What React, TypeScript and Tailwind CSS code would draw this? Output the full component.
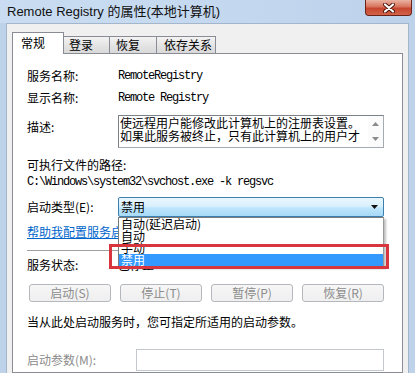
import React from "react";

const cjk = "font-['Noto_Sans_CJK_SC',sans-serif]";

function Btn({ label }: { label: string }) {
  return (
    <div className="w-[82px] h-[18px] rounded-[3px] border border-[#b4b8bc] bg-[linear-gradient(#f6f6f6,#efefef)] flex items-center justify-center text-[12px] leading-none text-[#8c8c8c]">
      {label}
    </div>
  );
}

export default function App() {
  return (
    <div className={`w-[415px] h-[373px] overflow-hidden bg-[#bed3ea] flex flex-col ${cjk} text-black`}>
      {/* Title bar */}
      <div className="relative h-[23px] shrink-0 flex items-center pl-[7px] bg-[linear-gradient(90deg,#c9dcf1,#c3d8ef_60%,#bcd2ea)]">
        <span className="text-[13px] leading-none font-['Liberation_Sans','Noto_Sans_CJK_SC',sans-serif] text-[#111]">
          Remote Registry 的属性(本地计算机)
        </span>
        <div className="absolute right-[3px] top-0 w-[47px] h-[16px] rounded-b-[4px] border border-t-0 border-[#6b2317] bg-[linear-gradient(#eab3a3,#d9735d_45%,#c6452f_55%,#d2644a)] flex items-center justify-center">
          <svg width="12" height="10" viewBox="0 0 12 10">
            <path d="M2 1.5 L10 8.5 M10 1.5 L2 8.5" stroke="#4a1208" strokeWidth="4" strokeLinecap="round" />
            <path d="M2 1.5 L10 8.5 M10 1.5 L2 8.5" stroke="#ffffff" strokeWidth="2.2" strokeLinecap="round" />
          </svg>
        </div>
      </div>

      {/* Body */}
      <div className="flex-1 mx-[6px] bg-[#f0f0f0] border-t border-x border-[#a3b6cc] pl-[5px] pr-[5px] pt-[8px] flex flex-col">
        {/* Tabs */}
        <div className="flex items-end h-[21px] shrink-0 text-[12px] leading-none">
          <div className="relative z-10 -mb-px w-[52px] h-[22px] bg-white border border-b-0 border-[#898c95] flex items-center pl-[8px] pb-[1px]">
            常规
          </div>
          <div className="w-[46px] h-[17px] border-t border-r border-[#898c95] bg-[linear-gradient(#f3f3f3,#e5e5e5_50%,#d9d9d9)] flex items-center pl-[5px]">
            登录
          </div>
          <div className="w-[47px] h-[17px] border-t border-r border-[#898c95] bg-[linear-gradient(#f3f3f3,#e5e5e5_50%,#d9d9d9)] flex items-center pl-[6px]">
            恢复
          </div>
          <div className="w-[59px] h-[17px] border-t border-r border-[#898c95] bg-[linear-gradient(#f3f3f3,#e5e5e5_50%,#d9d9d9)] flex items-center pl-[7px]">
            依存关系
          </div>
        </div>

        {/* Panel */}
        <div className="flex-1 bg-white border border-[#898c95] pl-[14px] pr-[18px] pt-[14px] flex flex-col text-[12px] leading-[16px]">
          <div className="flex h-[16px] items-center">
            <div className="w-[91px]">服务名称:</div>
            <div className="font-['Liberation_Mono',monospace] tracking-[-1.2px]">RemoteRegistry</div>
          </div>
          <div className="flex h-[16px] items-center mt-[6px]">
            <div className="w-[91px]">显示名称:</div>
            <div className="font-['Liberation_Mono',monospace] tracking-[-1.2px] whitespace-pre">Remote Registry</div>
          </div>
          <div className="flex mt-[9px]">
            <div className="w-[91px] pt-[4px]">描述:</div>
            <div className="w-[266px] h-[33px] border border-[#a5a9b0] border-t-[#7c8088] border-l-[#7c8088] flex overflow-hidden">
              <div className="flex-1 pl-[1px] text-[12px] leading-[13px] whitespace-nowrap overflow-hidden">
                <div>使远程用户能修改此计算机上的注册表设置。</div>
                <div>如果此服务被终止，只有此计算机上的用户才</div>
              </div>
              <div className="w-[15px] flex flex-col items-center justify-between py-[6px] bg-[#fbfbfb]">
                <svg width="7" height="4" viewBox="0 0 7 4"><path d="M0 4 L3.5 0 L7 4 Z" fill="#8a8a8a" /></svg>
                <svg width="7" height="4" viewBox="0 0 7 4"><path d="M0 0 L3.5 4 L7 0 Z" fill="#8a8a8a" /></svg>
              </div>
            </div>
          </div>
          <div className="h-[16px] mt-[9px] flex items-center">可执行文件的路径:</div>
          <div className="h-[16px] mt-[1px] flex items-center font-['Liberation_Mono',monospace] tracking-[-1.2px] whitespace-pre">
            {"C:\\Windows\\system32\\svchost.exe -k regsvc"}
          </div>
          <div className="flex mt-[7px] items-center">
            <div className="w-[91px]">启动类型(E):</div>
            <div className="relative z-20 w-[266px] h-[20px] rounded-[2px] border border-[#3c7fb1] bg-[linear-gradient(#eaf6fd,#d9f0fc_45%,#bee6fd_55%,#a7d9f5)] flex items-center pl-[2px]">
              <span className="flex-1">禁用</span>
              <svg className="mr-[5px]" width="7" height="4" viewBox="0 0 7 4"><path d="M0 0 L3.5 4 L7 0 Z" fill="#111" /></svg>
              {/* dropdown list */}
              <div className="absolute left-[-1px] top-[19px] w-[266px] h-[50px] bg-white border border-[#7a7a7a] border-r-[#9a9a9a] shadow-[2px_2px_2px_rgba(0,0,0,0.25)] flex flex-col pt-0 text-[12px] leading-[12px]">
                <div className="h-[12px] pl-[2px] flex items-center">自动(延迟启动)</div>
                <div className="h-[12px] pl-[2px] flex items-center">自动</div>
                <div className="h-[12px] pl-[2px] flex items-center">手动</div>
                <div className="h-[12px] pl-[2px] flex items-center bg-[#3399ff] text-white">禁用</div>
              </div>
              {/* red highlight frame */}
              <div className="absolute left-[-10px] top-[46px] w-[280px] h-[25px] border-[3px] border-[#d8363e]" />
            </div>
          </div>
          <div className="h-[16px] mt-[7px] flex items-center">
            <span className="text-[#0066cc] underline whitespace-nowrap">帮助我配置服务启动选项。</span>
          </div>
          <div className="h-px mt-[10px] bg-[#a0a0a0] w-[357px]" />
          <div className="flex h-[16px] items-center mt-[6px]">
            <div className="w-[91px]">服务状态:</div>
            <div>已停止</div>
          </div>
          <div className="flex gap-[9px] mt-[11px] ml-[2px]">
            <Btn label="启动(S)" />
            <Btn label="停止(T)" />
            <Btn label="暂停(P)" />
            <Btn label="恢复(R)" />
          </div>
          <div className="h-[16px] mt-[12px] flex items-center whitespace-nowrap">
            当从此处启动服务时，您可指定所适用的启动参数。
          </div>
          <div className="flex items-center mt-[19px]">
            <div className="w-[109px] text-[#8c8c8c]">启动参数(M):</div>
            <div className="w-[248px] h-[22px] border border-[#c4c7cc] bg-white" />
          </div>
        </div>
      </div>
    </div>
  );
}
